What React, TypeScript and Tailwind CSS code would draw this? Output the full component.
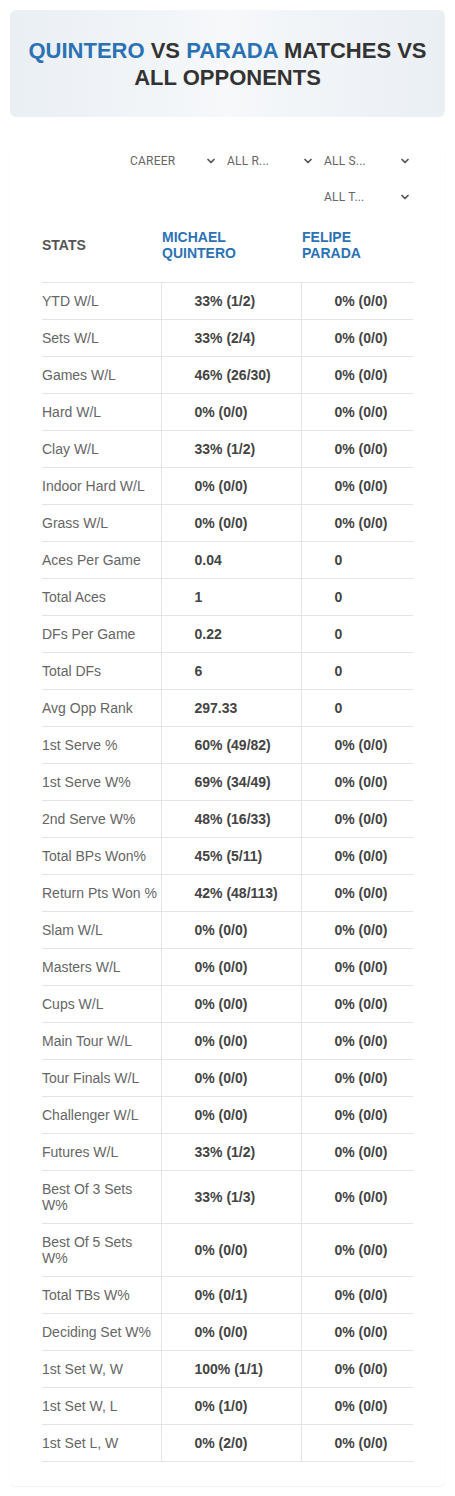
import { ChevronDown } from "lucide-react";

type Row = { label: string; a: string; b: string };

const rows: Row[] = [
	{ label: "YTD W/L", a: "33% (1/2)", b: "0% (0/0)" },
	{ label: "Sets W/L", a: "33% (2/4)", b: "0% (0/0)" },
	{ label: "Games W/L", a: "46% (26/30)", b: "0% (0/0)" },
	{ label: "Hard W/L", a: "0% (0/0)", b: "0% (0/0)" },
	{ label: "Clay W/L", a: "33% (1/2)", b: "0% (0/0)" },
	{ label: "Indoor Hard W/L", a: "0% (0/0)", b: "0% (0/0)" },
	{ label: "Grass W/L", a: "0% (0/0)", b: "0% (0/0)" },
	{ label: "Aces Per Game", a: "0.04", b: "0" },
	{ label: "Total Aces", a: "1", b: "0" },
	{ label: "DFs Per Game", a: "0.22", b: "0" },
	{ label: "Total DFs", a: "6", b: "0" },
	{ label: "Avg Opp Rank", a: "297.33", b: "0" },
	{ label: "1st Serve %", a: "60% (49/82)", b: "0% (0/0)" },
	{ label: "1st Serve W%", a: "69% (34/49)", b: "0% (0/0)" },
	{ label: "2nd Serve W%", a: "48% (16/33)", b: "0% (0/0)" },
	{ label: "Total BPs Won%", a: "45% (5/11)", b: "0% (0/0)" },
	{ label: "Return Pts Won %", a: "42% (48/113)", b: "0% (0/0)" },
	{ label: "Slam W/L", a: "0% (0/0)", b: "0% (0/0)" },
	{ label: "Masters W/L", a: "0% (0/0)", b: "0% (0/0)" },
	{ label: "Cups W/L", a: "0% (0/0)", b: "0% (0/0)" },
	{ label: "Main Tour W/L", a: "0% (0/0)", b: "0% (0/0)" },
	{ label: "Tour Finals W/L", a: "0% (0/0)", b: "0% (0/0)" },
	{ label: "Challenger W/L", a: "0% (0/0)", b: "0% (0/0)" },
	{ label: "Futures W/L", a: "33% (1/2)", b: "0% (0/0)" },
	{ label: "Best Of 3 Sets W%", a: "33% (1/3)", b: "0% (0/0)" },
	{ label: "Best Of 5 Sets W%", a: "0% (0/0)", b: "0% (0/0)" },
	{ label: "Total TBs W%", a: "0% (0/1)", b: "0% (0/0)" },
	{ label: "Deciding Set W%", a: "0% (0/0)", b: "0% (0/0)" },
	{ label: "1st Set W, W", a: "100% (1/1)", b: "0% (0/0)" },
	{ label: "1st Set W, L", a: "0% (1/0)", b: "0% (0/0)" },
	{ label: "1st Set L, W", a: "0% (2/0)", b: "0% (0/0)" },
];

const filters = ["CAREER", "ALL R...", "ALL S...", "ALL T..."];

const FilterSelect = ({ label }: { label: string }) => (
	<div className="w-[97px] h-9 flex items-center justify-between pl-[5px] pr-[5px] text-[12px] text-[#666] [font-family:Roboto,sans-serif]">
		<span className="tracking-[0.2px]">{label}</span>
		<ChevronDown className="w-3 h-3 text-[#555]" strokeWidth={3.5} />
	</div>
);

const App = () => {
	return (
		<div className="w-[455px] min-h-[1496px] bg-white [font-family:'Liberation_Sans',Arial,sans-serif] px-[10px] pt-[10px]">
			<div className="h-[107px] rounded-md bg-gradient-to-r from-[#eaeff4] via-[#f6f8fa] to-[#eaeff4] flex items-center justify-center px-3">
				<h1 className="text-center text-[22px] leading-[27px] font-bold uppercase text-[#333]">
					<span className="text-[#2b72b5]">Quintero</span> vs <span className="text-[#2b72b5]">Parada</span> matches vs all opponents
				</h1>
			</div>

			<div className="mt-[26px] rounded-md shadow-[0_1px_2px_rgba(0,0,0,0.06)] pb-[24px]">
				<div className="mx-auto w-[371px]">
					<div className="flex flex-wrap justify-end -mr-[3px]">
						{filters.map((f) => (
							<FilterSelect key={f} label={f} />
						))}
					</div>

					<table className="w-full mt-[10px] border-collapse text-sm">
						<thead>
							<tr className="border-b border-[#e2e5e8]">
								<th className="w-[119px] h-[57px] pb-4 text-left align-middle text-[14px] font-bold text-[#555] uppercase">Stats</th>
								<th className="w-[140px] pb-4 text-left align-middle pl-px text-[14px] leading-4 font-bold text-[#2b72b5] uppercase">
									Michael
									<br />
									Quintero
								</th>
								<th className="pb-4 text-left align-middle pl-px text-[14px] leading-4 font-bold text-[#2b72b5] uppercase">
									Felipe
									<br />
									Parada
								</th>
							</tr>
						</thead>
						<tbody>
							{rows.map((r) => (
								<tr key={r.label} className="border-b border-[#e2e5e8]">
									<td className="py-[10px] leading-4 text-[#666]">{r.label}</td>
									<td className="py-[10px] leading-4 pl-[33px] font-bold text-[#444] border-l border-[#e2e5e8]">{r.a}</td>
									<td className="py-[10px] leading-4 pl-[33px] font-bold text-[#444] border-l border-[#e2e5e8]">{r.b}</td>
								</tr>
							))}
						</tbody>
					</table>
				</div>
			</div>
		</div>
	);
};

export default App;
